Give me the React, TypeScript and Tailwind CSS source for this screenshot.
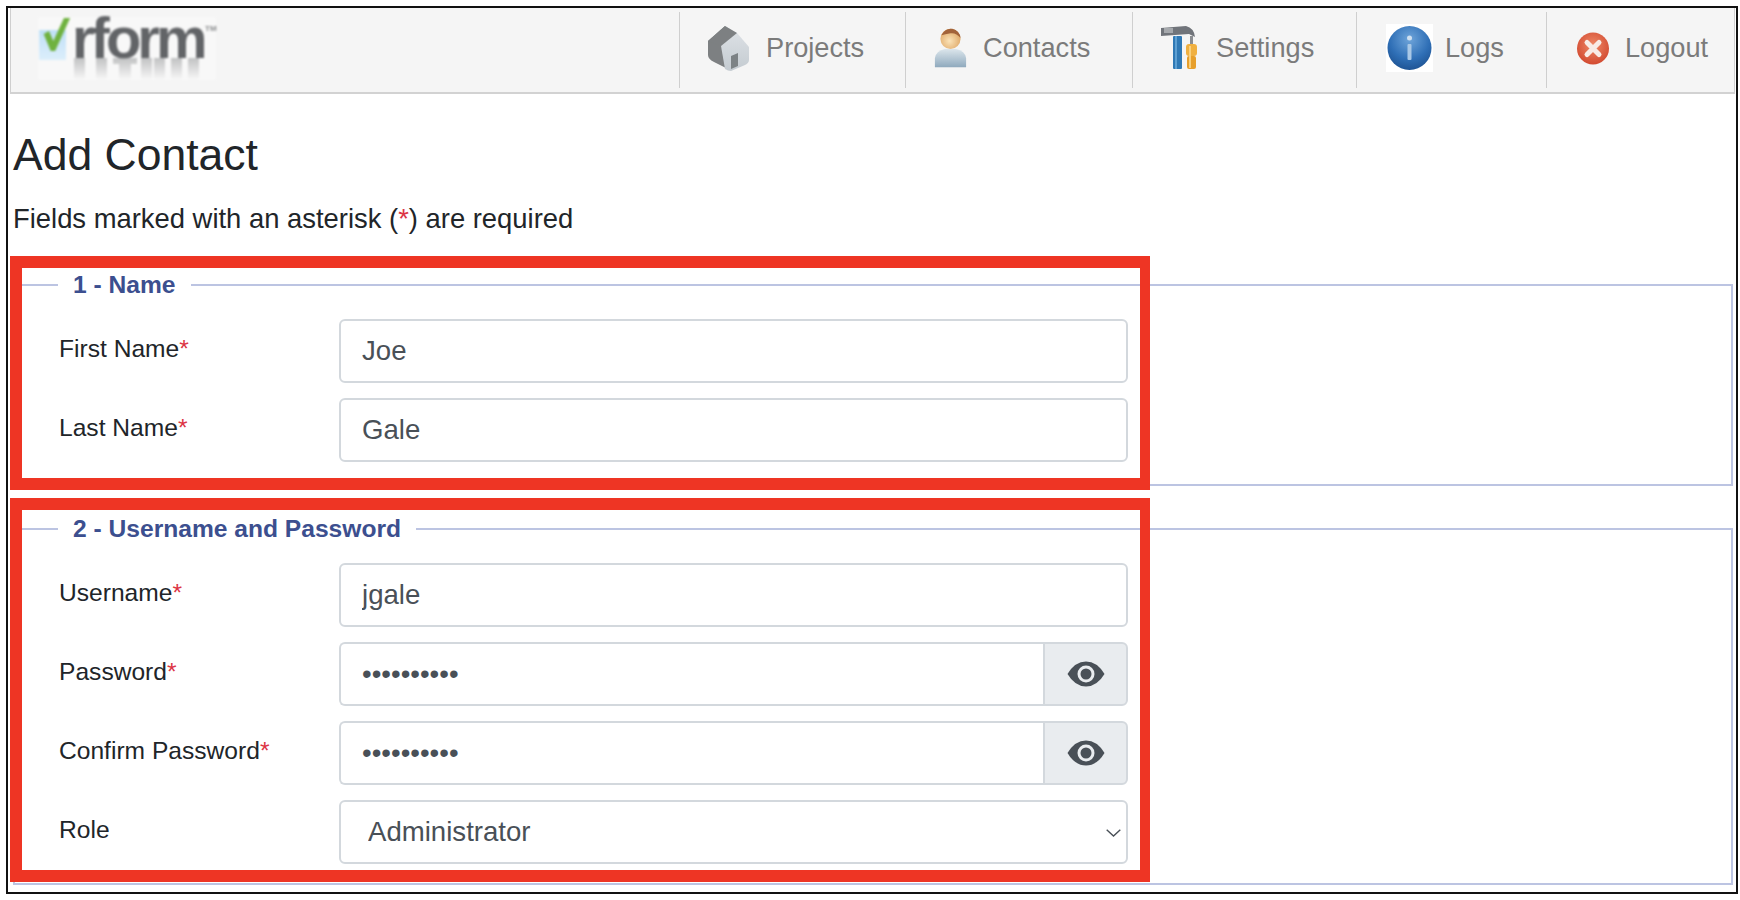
const FONT = "font-['Liberation_Sans',Arial,sans-serif]";

function HouseIcon() {
  return (
    <svg width="44" height="48" viewBox="0 0 44 48" className="blur-[0.4px]">
      <defs>
        <linearGradient id="houseFront" x1="0" y1="0" x2="0" y2="1">
          <stop offset="0" stopColor="#dfe3e7" />
          <stop offset="1" stopColor="#c4cbd1" />
        </linearGradient>
      </defs>
      <path d="M1 17 L18 2 L24 6 L19 44 L7 38 Q1 35 1 31 Z" fill="#7d8082" />
      <path d="M18 2 L30 9 L42 23 L42 36 Q42 39 38 41 L24 47 Q21 47 18 45 L14 22 Z" fill="url(#houseFront)" />
      <path d="M1 17 L18 2 L30 9 L14 22 Z" fill="#7d8082" />
      <path d="M24 32 L31 29 L31 42 L24 45 Z" fill="#7c8285" />
    </svg>
  );
}

function PersonIcon() {
  return (
    <svg width="33" height="42" viewBox="0 0 36 44" className="blur-[0.4px]">
      <defs>
        <linearGradient id="personBody" x1="0" y1="0" x2="0" y2="1">
          <stop offset="0" stopColor="#dce6ec" />
          <stop offset="1" stopColor="#8fa9bd" />
        </linearGradient>
        <radialGradient id="personHead" cx="0.45" cy="0.6" r="0.65">
          <stop offset="0" stopColor="#fbe3b8" />
          <stop offset="1" stopColor="#dca25f" />
        </radialGradient>
      </defs>
      <path d="M1 43 L1 33 Q2 25 12 23 L24 23 Q34 25 35 33 L35 43 Z" fill="url(#personBody)" />
      <circle cx="18" cy="12" r="11" fill="url(#personHead)" />
      <path d="M8 8 Q12 0 20 1 Q28 3 29 11 Q24 5 18 6 Q12 7 8 8 Z" fill="#a2633a" />
    </svg>
  );
}

function ToolsIcon() {
  return (
    <svg width="40" height="44" viewBox="0 0 40 44" className="blur-[0.4px]">
      <path d="M0 2 L25 0 Q33 2 34 11 L28 8 L0 10 Z" fill="#70747a" />
      <rect x="3" y="2" width="9" height="5" fill="#a5a8ac" />
      <rect x="12" y="10" width="9" height="33" rx="1" fill="#2f79b5" />
      <rect x="14" y="10" width="2" height="33" fill="#5da0d3" />
      <rect x="29" y="10" width="3" height="9" fill="#8a8d91" />
      <rect x="25" y="18" width="11" height="12" rx="3" fill="#f0b040" />
      <rect x="26" y="30" width="9" height="13" rx="2" fill="#e79f2b" />
      <rect x="28" y="20" width="2" height="22" fill="#f8d07e" />
    </svg>
  );
}

function InfoIcon() {
  return (
    <div className="w-[47px] h-[48px] bg-white flex items-center justify-center">
      <svg width="45" height="46" viewBox="0 0 45 46">
        <defs>
          <radialGradient id="infoBall" cx="0.5" cy="0.3" r="0.75">
            <stop offset="0" stopColor="#6fa5da" />
            <stop offset="0.6" stopColor="#2f6fb6" />
            <stop offset="1" stopColor="#1c4f8e" />
          </radialGradient>
        </defs>
        <circle cx="22.5" cy="23" r="22" fill="url(#infoBall)" />
        <circle cx="22.5" cy="13" r="2.5" fill="#cfe0f0" />
        <rect x="20.5" y="19" width="4" height="16" rx="1" fill="#a9c8e6" />
      </svg>
    </div>
  );
}

function LogoutIcon() {
  return (
    <svg width="32" height="33" viewBox="0 0 32 33">
      <defs>
        <radialGradient id="logoutBall" cx="0.5" cy="0.4" r="0.65">
          <stop offset="0" stopColor="#ef8a68" />
          <stop offset="1" stopColor="#d0452c" />
        </radialGradient>
      </defs>
      <circle cx="16" cy="16.5" r="16" fill="url(#logoutBall)" />
      <path d="M10 10.5 L22 22.5 M22 10.5 L10 22.5" stroke="#f8ece6" strokeWidth="5" strokeLinecap="round" />
    </svg>
  );
}

function EyeIcon() {
  return (
    <svg width="38" height="26" viewBox="0 0 38 26">
      <path d="M0.5 13 Q8 0.5 19 0.5 Q30 0.5 37.5 13 Q30 25.5 19 25.5 Q8 25.5 0.5 13 Z" fill="#495057" />
      <circle cx="19" cy="13" r="8.5" fill="#e9ecef" />
      <circle cx="19" cy="13" r="5.5" fill="#495057" />
    </svg>
  );
}

function Logo() {
  return (
    <div className="relative w-[178px] h-[63px] ml-[27px] mt-[5px] bg-[#f8f8f8] blur-[1px]">
      <div className="absolute left-[1px] top-[13px] w-[27px] h-[30px] bg-gradient-to-b from-[#bfe0f7] to-[#dceefb]" />
      <svg width="30" height="36" viewBox="0 0 34 36" className="absolute left-[3px] top-0" preserveAspectRatio="none">
        <path d="M3 17 L9 14 L14 24 L26 1 L33 1 L16 34 L11 34 Z" fill="#6fb23f" />
      </svg>
      <span className="absolute left-[34px] top-0 text-[58px] leading-[41px] font-bold tracking-[-4px] text-[#626467] font-['Liberation_Sans',Arial,sans-serif]">
        rform
      </span>
      {/* faded reflection under the word mark */}
      <svg width="178" height="22" viewBox="0 0 178 22" className="absolute left-0 top-[41px]">
        <defs>
          <linearGradient id="logoFade" x1="0" y1="0" x2="0" y2="1">
            <stop offset="0" stopColor="#8a8c8e" stopOpacity="0.5" />
            <stop offset="1" stopColor="#8a8c8e" stopOpacity="0" />
          </linearGradient>
        </defs>
        <path d="M36 0h11v22H36zM58 0h11v22H58zM75 0h24v6h-6v16h-12V6h-6zM103 0h11v22h-11zM116 0h11v22h-11zM133 0h11v22h-11zM150 0h11v22h-11z" fill="url(#logoFade)" />
      </svg>
      <span className="absolute left-[167px] top-[8px] text-[8px] leading-[8px] font-bold text-[#8a8c8e]">TM</span>
    </div>
  );
}

function NavItem({ width, pl, gap, icon, label }: { width: string; pl: string; gap: string; icon: React.ReactNode; label: string }) {
  return (
    <div className={`flex items-center border-l border-[#cfcfcf] ${width} ${pl} ${gap}`}>
      <div className="shrink-0 -mt-[4px] flex">{icon}</div>
      <span className="text-[27.2px] leading-[30px] text-[#7b7b7b] -mt-[5px]">{label}</span>
    </div>
  );
}

function Label({ text, required }: { text: string; required?: boolean }) {
  return (
    <label className="w-[324px] shrink-0 pl-[44px] -mt-[4px] text-[#212529]">
      {text}
      {required && <span className="text-[#dc3545]">*</span>}
    </label>
  );
}

const inputCls = 'w-full h-[64px] pl-[21px] pr-3 bg-white border-2 border-[#d3d8dd] rounded-[6px] text-[27.6px] text-[#495057] outline-none';

function TextRow({ label, value }: { label: string; value: string }) {
  return (
    <div className="flex items-center">
      <Label text={label} required />
      <div className="w-[789px]">
        <input readOnly value={value} className={inputCls} />
      </div>
    </div>
  );
}

function PasswordRow({ label }: { label: string }) {
  return (
    <div className="flex items-center">
      <Label text={label} required />
      <div className="w-[789px] flex">
        <input
          readOnly
          type="password"
          value="••••••••••"
          className="flex-1 min-w-0 h-[64px] pl-[21px] pr-3 bg-white border-2 border-r-0 border-[#d3d8dd] rounded-l-[6px] text-[27.6px] text-[#495057] outline-none"
        />
        <div className="w-[85px] h-[64px] flex items-center justify-center bg-[#e9ecef] border-2 border-[#d3d8dd] rounded-r-[6px]">
          <EyeIcon />
        </div>
      </div>
    </div>
  );
}

function RedBox({ className }: { className: string }) {
  return <div className={`absolute left-[2px] w-[1140px] border-solid border-[#ee3524] border-l-[12px] border-y-[12px] border-r-[10px] ${className}`} />;
}

export default function App() {
  return (
    <div className={`w-[1740px] h-[900px] bg-white pl-[6px] pt-[6px] pr-[2px] pb-[6px] text-[24.6px] leading-[30px] ${FONT}`}>
      <div className="relative h-full border-2 border-[#111] overflow-hidden">
        <header className="flex justify-between h-[86px] ml-[2px] mr-[1px] bg-[#f5f5f5] border-l border-[#cfcfcf] border-r border-b-2 border-b-[#d2d2d2] py-[4px]">
          <Logo />
          <nav className="flex">
            <NavItem width="w-[226px]" pl="pl-[27px]" gap="gap-[15px]" icon={<HouseIcon />} label="Projects" />
            <NavItem width="w-[227px]" pl="pl-[28px]" gap="gap-[16px]" icon={<PersonIcon />} label="Contacts" />
            <NavItem width="w-[224px]" pl="pl-[28px]" gap="gap-[15px]" icon={<ToolsIcon />} label="Settings" />
            <NavItem width="w-[190px]" pl="pl-[29px]" gap="gap-[12px]" icon={<InfoIcon />} label="Logs" />
            <NavItem width="w-[188px]" pl="pl-[30px]" gap="gap-[16px]" icon={<LogoutIcon />} label="Logout" />
          </nav>
        </header>

        <main className="pl-[5px] pr-[3px]">
          <h1 className="text-[44.5px] leading-[54px] text-[#212529] mt-[34px]">Add Contact</h1>
          <p className="text-[27.4px] text-[#212529] mt-[22px]">
            Fields marked with an asterisk (<span className="text-[#dc3545]">*</span>) are required
          </p>

          <fieldset className="border-2 border-[#bcc4e2] mt-[37px] h-[215px]">
            <legend className="ml-[43px] px-[15px] font-bold leading-[28px] text-[#3c4f8f]">1 - Name</legend>
            <div className="flex flex-col gap-[15px] pt-[20px]">
              <TextRow label="First Name" value="Joe" />
              <TextRow label="Last Name" value="Gale" />
            </div>
          </fieldset>

          <fieldset className="border-2 border-[#bcc4e2] mt-[29px] h-[370px]">
            <legend className="ml-[43px] px-[15px] font-bold leading-[28px] text-[#3c4f8f]">2 - Username and Password</legend>
            <div className="flex flex-col gap-[15px] pt-[20px]">
              <TextRow label="Username" value="jgale" />
              <PasswordRow label="Password" />
              <PasswordRow label="Confirm Password" />
              <div className="flex items-center">
                <Label text="Role" />
                <div className="relative w-[789px]">
                  <select className={`${inputCls} appearance-none pl-[27px]`} defaultValue="Administrator">
                    <option>Administrator</option>
                  </select>
                  <svg width="15" height="8" viewBox="0 0 15 8" className="absolute right-[7px] top-[29px]">
                    <path d="M0.7 0.7 L7.5 7 L14.3 0.7" fill="none" stroke="#495057" strokeWidth="1.4" />
                  </svg>
                </div>
              </div>
            </div>
          </fieldset>
        </main>

        {/* red annotation frames drawn over the form */}
        <RedBox className="top-[248px] h-[234px]" />
        <RedBox className="top-[490px] h-[384px]" />
      </div>
    </div>
  );
}
